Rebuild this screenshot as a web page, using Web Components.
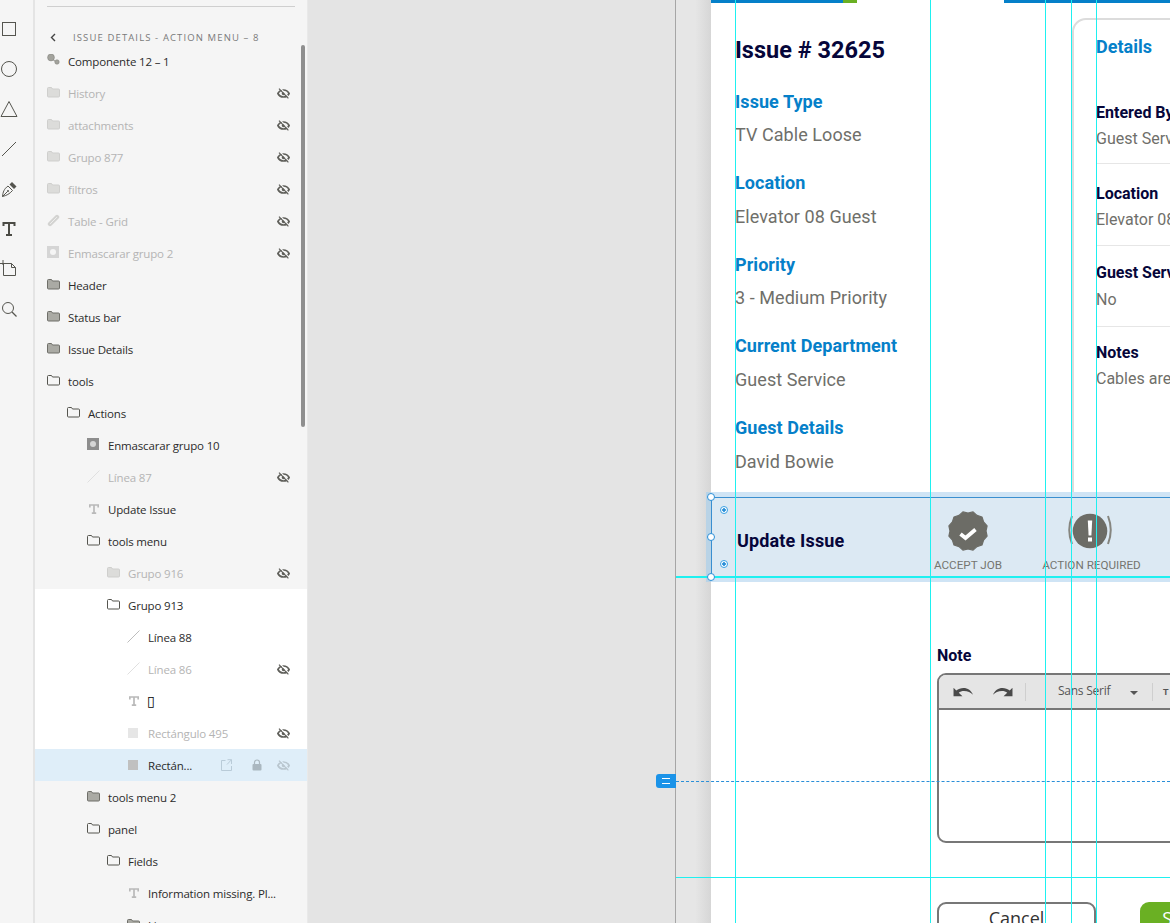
<!DOCTYPE html>
<html>
<head>
<meta charset="utf-8">
<title>Issue details</title>
<style>
  html, body { margin: 0; height: 100%; overflow: hidden; background: #e4e4e4; }
</style>
</head>
<body>
<app-shell></app-shell>

<script>
const ICONS = {
  folder: (stroke, fill) => `<svg width="13" height="11" viewBox="0 0 13 11"><path d="M.5 1.5q0-1 1-1h3l1 1.500h6q1 0 1 1v6q0 1-1 1h-10q-1 0-1-1z" fill="${fill}" stroke="${stroke}"/></svg>`,
  link: c => `<svg width="13" height="13" viewBox="0 0 13 13"><path d="M3 10 10 3" stroke="${c}" stroke-width="4.400" stroke-linecap="round"/><path d="M3.400 9.600 9.600 3.400" stroke="#f5f5f5" stroke-width=".8" stroke-linecap="round"/></svg>`,
  mask: (c, hole) => `<svg width="12" height="12" viewBox="0 0 12 12"><rect width="12" height="12" fill="${c}"/><circle cx="6" cy="6" r="3" fill="${hole}"/></svg>`,
  line: c => `<svg width="13" height="13" viewBox="0 0 13 13"><path d="M.5 12.500 12.500 .5" stroke="${c}"/></svg>`,
  text: () => `<svg style="margin:2px 0 0 2px" width="10" height="10" viewBox="0 0 10 10"><path d="M.8 3.400V1h8.400v2.400M5 1v8M2.800 9.200h4.400" fill="none" stroke="#b9b9b9" stroke-width="1.700"/></svg>`,
  rect: c => `<svg style="margin:2px 0 0 1px" width="10" height="10" viewBox="0 0 10 10"><rect width="10" height="10" fill="${c}"/></svg>`,
  comp: () => `<svg width="13" height="12" viewBox="0 0 13 12"><path d="M4 4 9 8" stroke="#8b8b85"/><circle cx="4" cy="3.500" r="3.400" fill="#a3a39d" stroke="#85857f" stroke-width=".6"/><circle cx="10" cy="8" r="2.200" fill="#a3a39d" stroke="#85857f" stroke-width=".6"/></svg>`
};

// eye with a slash; the light line beside the slash is the row background showing through
const EYE_OFF = (c, bg) => `<svg width="13" height="11" viewBox="0 0 13 11"><path d="M.9 5.500C2.200 3 4.200 2 6.500 2S10.800 3 12.100 5.500C10.800 8 8.800 9 6.500 9S2.200 8 .9 5.500z" fill="none" stroke="${c}" stroke-width="1.700"/><circle cx="6.500" cy="5.500" r="1.700" fill="${c}"/><path d="M3.100 0 12.500 9.800" stroke="${bg}" stroke-width="1.200"/><path d="M2 .6 11.400 10.400" stroke="${c}" stroke-width="1.200"/></svg>`;

class LayerRow extends HTMLElement {
  connectedCallback() {
    const level = parseInt(this.getAttribute('level')) || 0;
    const icon = this.getAttribute('icon') || 'folder';
    const dim = this.hasAttribute('dim');
    const open = this.hasAttribute('open');
    const hidden = this.hasAttribute('hidden-eye');
    const active = this.hasAttribute('active');
    const white = this.hasAttribute('white');
    const soft = this.hasAttribute('soft-icon');

    const c = dim ? '#d3d3d1' : '#a8a8a2';
    const hole = white ? '#fff' : '#f5f5f5';
    const rowBg = active ? '#dfeef9' : white ? '#fff' : '#f5f5f5';
    let glyph;
    if (icon === 'folder') {
      if (open) glyph = ICONS.folder('#55554f', 'none');
      else glyph = dim ? ICONS.folder('#cfcfcd', '#dcdcda') : ICONS.folder('#6f6f69', '#aaaaa4');
    }
    else if (icon === 'mask') glyph = dim ? ICONS.mask('#d5d5d5', hole) : ICONS.mask('#8d8d8d', '#d5d5d5');
    else if (icon === 'line') glyph = ICONS.line(soft ? '#bdbdbd' : '#e0e0e0');
    else if (icon === 'rect') glyph = ICONS.rect(dim ? '#e6e6e6' : '#c0c0c0');
    else glyph = ICONS[icon](c);

    this.attachShadow({ mode: 'open' });
    this.shadowRoot.innerHTML = `
      <style>
        :host {
          display: flex;
          align-items: center;
          height: 32px;
          padding-left: ${12 + level * 20}px;
          padding-right: 17px;
          color: ${dim ? '#b4b4b4' : '#2b2b2b'};
          background: ${active ? '#dfeef9' : white ? '#fff' : 'transparent'};
        }
        .ico { width: 21px; display: flex; align-items: center; flex: none; margin-top: -2px; }
        .lbl { flex: 1; white-space: nowrap; }
        .tools { display: flex; align-items: center; }
        .ext { margin-right: 20px; }
        .lock { margin-right: 15px; }
      </style>
      <span class="ico">${glyph}</span>
      <span class="lbl"><slot></slot></span>
      <span class="tools">
        ${active ? `<svg class="ext" width="11" height="12" viewBox="0 0 11 12"><path d="M4.500 1.500H.5v10h10V7M6.500 .7h4V5M10.500 .7 6 5.500" fill="none" stroke="#b9cbd8"/></svg>
          <svg class="lock" width="10" height="12" viewBox="0 0 10 12"><rect x=".5" y="5" width="9" height="6.500" rx="1" fill="#aab7c0"/><path d="M2.500 5V3.500a2.500 2.500 0 0 1 5 0V5" fill="none" stroke="#aab7c0" stroke-width="1.200"/></svg>` : ''}
        ${hidden ? EYE_OFF(active ? '#b9c6cf' : '#5f5f5a', rowBg) : ''}
      </span>`;
  }
}
customElements.define('layer-row', LayerRow);

class LayerPanel extends HTMLElement {
  constructor() {
    super();
    this.attachShadow({ mode: 'open' });
    this.shadowRoot.innerHTML = `
      <style>
        :host {
          display: block;
          position: relative;
          width: 272px;
          flex: none;
          height: 923px;
          overflow: hidden;
          background: #f5f5f5;
          font: 11.500px "Open Sans", "Noto Sans", sans-serif;
          letter-spacing: -.17px;
          box-sizing: border-box;
        }
        .rule { height: 1px; background: #cfcfcf; margin: 6px 12px 0; }
        .crumb {
          box-sizing: border-box;
          display: flex;
          align-items: center;
          height: 38px;
          padding: 22px 0 0 12px;
          font-size: 9.500px;
          letter-spacing: 1.120px;
          color: #7a7a7a;
        }
        .crumb svg { margin: 0 17px 0 3px; }
        .sel { background: #fff; }
        .bar {
          position: absolute;
          left: 266px;
          top: 45px;
          width: 4px;
          height: 382px;
          border-radius: 2px;
          background: #8f8f8f;
        }
      </style>
      <div class="rule"></div>
      <div class="crumb">
        <svg width="6" height="9" viewBox="0 0 6 9"><path d="M5 1 1.500 4.500 5 8" fill="none" stroke="#444" stroke-width="1.400"/></svg>
        ISSUE DETAILS - ACTION MENU – 8
      </div>
      <layer-row icon="comp">Componente 12 – 1</layer-row>
      <layer-row dim hidden-eye>History</layer-row>
      <layer-row dim hidden-eye>attachments</layer-row>
      <layer-row dim hidden-eye>Grupo 877</layer-row>
      <layer-row dim hidden-eye>filtros</layer-row>
      <layer-row dim hidden-eye icon="link">Table - Grid</layer-row>
      <layer-row dim hidden-eye icon="mask">Enmascarar grupo 2</layer-row>
      <layer-row>Header</layer-row>
      <layer-row>Status bar</layer-row>
      <layer-row>Issue Details</layer-row>
      <layer-row open>tools</layer-row>
      <layer-row open level="1">Actions</layer-row>
      <layer-row level="2" icon="mask">Enmascarar grupo 10</layer-row>
      <layer-row level="2" icon="line" dim hidden-eye>Línea 87</layer-row>
      <layer-row level="2" icon="text">Update Issue</layer-row>
      <layer-row level="2" open>tools menu</layer-row>
      <layer-row level="3" dim hidden-eye>Grupo 916</layer-row>
      <div class="sel">
        <layer-row level="3" open white>Grupo 913</layer-row>
        <layer-row level="4" icon="line" soft-icon white>Línea 88</layer-row>
        <layer-row level="4" icon="line" dim hidden-eye white>Línea 86</layer-row>
        <layer-row level="4" icon="text" white><span style="font:700 14px 'DejaVu Sans',sans-serif;color:#000;margin-left:-1px">▯</span></layer-row>
        <layer-row level="4" icon="rect" dim hidden-eye white>Rectángulo 495</layer-row>
      </div>
      <layer-row level="4" icon="rect" active hidden-eye>Rectán...</layer-row>
      <layer-row level="2">tools menu 2</layer-row>
      <layer-row level="2" open>panel</layer-row>
      <layer-row level="3" open>Fields</layer-row>
      <layer-row level="4" icon="text">Information missing. Pl...</layer-row>
      <layer-row level="4">Line</layer-row>
      <div class="bar"></div>`;
  }
}
customElements.define('layer-panel', LayerPanel);

class ToolRail extends HTMLElement {
  constructor() {
    super();
    this.attachShadow({ mode: 'open' });
    const c = '#55554f';
    const tools = [
      `<rect x="2.500" y="2.500" width="13" height="13" fill="none" stroke="${c}"/>`,
      `<circle cx="9" cy="9" r="7.500" fill="none" stroke="${c}"/>`,
      `<path d="M9 1.500 17 16.500H1z" fill="none" stroke="${c}"/>`,
      `<path d="M2 16 16 2" fill="none" stroke="${c}"/>`,
      `<path d="M2.500 16.500C3 12 4 9 8 6l4.500 4.500C9.500 14 6.500 15.500 2.500 16.500zM2.500 16.500l5-5" fill="none" stroke="${c}"/><path d="M9.500 4.500 12 2 16.500 6.500 14 9z" fill="${c}"/><circle cx="8" cy="11" r="1" fill="${c}"/>`,
      `<path d="M3.500 6V3h11v3M9 3v12M6 15h6" fill="none" stroke="#4b4b45" stroke-width="2"/>`,
      `<path d="M3.500 3.500h8l4 4v8h-12zM11.500 3.500v4h4M0 3.500h5M3 0v5" fill="none" stroke="${c}"/>`,
      `<circle cx="8" cy="8" r="5.500" fill="none" stroke="${c}"/><path d="M12 12l4.500 4.500" stroke="${c}" stroke-width="1.300"/>`
    ];
    this.shadowRoot.innerHTML = `
      <style>
        :host {
          display: flex;
          flex-direction: column;
          width: 33px;
          height: 923px;
          flex: none;
          padding-top: 20px;
          background: #f5f5f5;
          border-right: 2px solid #e4e4e4;
          box-sizing: content-box;
        }
        svg { display: block; height: 18px; width: 18px; margin-bottom: 22px; }
      </style>
      ${tools.map(t => `<svg viewBox="0 0 18 18">${t}</svg>`).join('')}`;
  }
}
customElements.define('tool-rail', ToolRail);

class IssueField extends HTMLElement {
  constructor() {
    super();
    this.attachShadow({ mode: 'open' });
    this.shadowRoot.innerHTML = `
      <style>
        :host { display: block; height: 81.600px; letter-spacing: .06px; }
        .k { font-weight: 700; font-size: 18px; line-height: 24px; color: #0580c9; padding-top: .5px; }
        .v { font-size: 18px; line-height: 24px; color: #6f6f6a; margin-top: 9.800px; white-space: nowrap; }
      </style>
      <div class="k"></div>
      <div class="v"><slot></slot></div>`;
  }
  connectedCallback() {
    this.shadowRoot.querySelector('.k').textContent = this.getAttribute('label');
  }
}
customElements.define('issue-field', IssueField);

class DetailRow extends HTMLElement {
  constructor() {
    super();
    this.attachShadow({ mode: 'open' });
    this.shadowRoot.innerHTML = `
      <style>
        :host { display: block; box-sizing: border-box; height: 82px; border-bottom: 1px solid #e6e6e6; white-space: nowrap; }
        :host([last]) { border-bottom: 0; }
        .k { font-weight: 700; font-size: 16px; line-height: 22px; color: #06063a; padding-top: var(--pad, 20px); }
        .v { font-size: 16px; line-height: 22px; color: #6f6f6a; margin-top: var(--gap, 4px); }
      </style>
      <div class="k"></div>
      <div class="v"><slot></slot></div>`;
  }
  connectedCallback() {
    this.shadowRoot.querySelector('.k').textContent = this.getAttribute('label');
  }
}
customElements.define('detail-row', DetailRow);

class ActionIcon extends HTMLElement {
  connectedCallback() {
    this.attachShadow({ mode: 'open' });
    const kind = this.getAttribute('kind');
    const c = '#6c6c66';
    let pts = [];
    for (let i = 0; i < 24; i++) {
      const r = i % 2 ? 19.800 : 18;
      const a = i * Math.PI / 12;
      pts.push((21 + r * Math.sin(a)).toFixed(1) + ',' + (21 - r * Math.cos(a)).toFixed(1));
    }
    const art = kind === 'accept'
      ? `<polygon points="${pts.join(' ')}" fill="${c}" stroke="${c}" stroke-width="1.200" stroke-linejoin="round"/>
         <path d="M13.500 24 18.500 28 28.500 19.500" fill="none" stroke="#fff" stroke-width="3.800"/>`
      : `<circle cx="21" cy="21" r="17.300" fill="${c}"/>
         <path d="M18.800 10.500h4.400L22.400 25.500h-2.800z" fill="#fff"/><rect x="19" y="27.500" width="4" height="4" fill="#fff"/>
         <path d="M3 6Q-2.500 20 3 34M39 6Q44.500 20 39 34" fill="none" stroke="#85857f" stroke-width="2"/>`;
    this.shadowRoot.innerHTML = `
      <style>
        :host {
          display: flex;
          flex-direction: column;
          align-items: center;
          width: 120px;
          margin-top: -2px;
        }
        svg { display: block; overflow: visible; }
        :host([kind="action"]) svg { margin-right: 3px; }
        span { font-size: 11.700px; line-height: 16px; color: #757570; margin-top: 4.500px; white-space: nowrap; }
      </style>
      <svg width="42" height="42" viewBox="0 0 42 42">${art}</svg>
      <span><slot></slot></span>`;
  }
}
customElements.define('action-icon', ActionIcon);

class UpdateBand extends HTMLElement {
  constructor() {
    super();
    this.attachShadow({ mode: 'open' });
    this.shadowRoot.innerHTML = `
      <style>
        :host {
          position: absolute;
          left: 30px;
          top: 492px;
          width: 600px;
          height: 90px;
          background: #cfe4f5;
        }
        .strip { position: absolute; left: 0; top: 0; width: 5px; height: 100%; background: #b9d3e6; }
        .inner {
          position: absolute;
          left: 5px;
          right: 0;
          top: 5px;
          height: 80px;
          box-sizing: border-box;
          background: #dce9f3;
          border-top: 1px solid #3a8fd0;
          border-left: 1px solid #3a8fd0;
          display: flex;
          align-items: center;
          padding-left: 25px;
        }
        .title { width: 171px; font-size: 18px; font-weight: 700; color: #06063a; margin-top: 5px; white-space: nowrap; letter-spacing: .15px; }
        .acts { display: flex; gap: 3.500px; padding-top: 10px; }
      </style>
      <div class="strip"></div>
      <div class="inner">
        <div class="title">Update Issue</div>
        <div class="acts">
          <action-icon kind="accept">ACCEPT JOB</action-icon>
          <action-icon kind="action">ACTION REQUIRED</action-icon>
        </div>
      </div>`;
  }
}
customElements.define('update-band', UpdateBand);

class NoteEditor extends HTMLElement {
  constructor() {
    super();
    this.attachShadow({ mode: 'open' });
    const arrow = 'M.5 9.500V1.500l2.600 2.600C5 2.500 7.500 1.700 10 1.700c4 0 7.500 2.500 9 6.500-2-2.500-5-3.700-8.500-3.700-2 0-3.800.6-5 1.600L9 9.500z';
    this.shadowRoot.innerHTML = `
      <style>
        :host {
          position: absolute;
          left: 226px;
          top: 645px;
          width: 500px;
          display: block;
        }
        label { display: block; font-size: 16px; font-weight: 700; line-height: 22px; color: #06063a; margin-bottom: 6px; }
        .box { box-sizing: border-box; height: 170px; border: 2px solid #777; border-radius: 9px; overflow: hidden; background: #fff; }
        .bar {
          box-sizing: border-box;
          display: flex;
          align-items: center;
          height: 35px;
          background: #e5e5e5;
          border-bottom: 2px solid #777;
          color: #555;
          font: 12px "Open Sans", "Noto Sans", sans-serif;
        }
        .bar svg { flex: none; }
        .sep { width: 1px; height: 18px; background: #cfcfcf; flex: none; }
        .font { width: 72px; margin-left: 32px; white-space: nowrap; letter-spacing: -.25px; margin-top: -3px; }
        .caret { width: 0; height: 0; border: 4px solid transparent; border-top-color: #555; border-bottom: 0; margin-top: 2px; }
        .t { font: 700 9px "Liberation Sans", sans-serif; margin-left: 10px; }
      </style>
      <label>Note</label>
      <div class="box">
        <div class="bar">
          <svg style="margin-left:14px" width="21" height="11" viewBox="0 0 20 10"><path d="${arrow}" fill="#4a4a4a"/></svg>
          <svg style="margin-left:18px;transform:scaleX(-1)" width="21" height="11" viewBox="0 0 20 10"><path d="${arrow}" fill="#4a4a4a"/></svg>
          <span class="sep" style="margin-left:12px"></span>
          <span class="font">Sans Serif</span>
          <span class="caret"></span>
          <span class="sep" style="margin-left:14px"></span>
          <span class="t">T</span>
        </div>
      </div>`;
  }
}
customElements.define('note-editor', NoteEditor);

class FormButtons extends HTMLElement {
  constructor() {
    super();
    this.attachShadow({ mode: 'open' });
    this.shadowRoot.innerHTML = `
      <style>
        :host {
          position: absolute;
          left: 226px;
          top: 902px;
          display: flex;
          gap: 44px;
          font: 18px "Open Sans", "Noto Sans", sans-serif;
        }
        button {
          font: inherit;
          width: 159px;
          height: 48px;
          padding: 0 0 16px;
          border-radius: 9px;
          box-sizing: border-box;
          white-space: nowrap;
        }
        .cancel { background: #fff; border: 2px solid #777; color: #333; }
        .save { width: 160px; background: #6ab023; border: 0; color: #fff; }
      </style>
      <button class="cancel">Cancel</button>
      <button class="save">Save Changes</button>`;
  }
}
customElements.define('form-buttons', FormButtons);

class CanvasBoard extends HTMLElement {
  constructor() {
    super();
    this.attachShadow({ mode: 'open' });
    const vGuides = [735, 930, 1045, 1071, 1096];
    const handles = [497, 537, 577];
    const radios = [510, 564];
    // canvas starts at x=307, so everything over it is shifted by that
    this.shadowRoot.innerHTML = `
      <style>
        :host {
          display: block;
          position: relative;
          flex: 1;
          height: 923px;
          overflow: hidden;
          background: #e4e4e4;
          box-shadow: inset 1px 0 0 #e9e9e9;
          font-family: Roboto, "Liberation Sans", sans-serif;
        }
        .edge { position: absolute; left: 368px; top: 0; bottom: 0; width: 1px; background: #a6a6a6; }
        .gutter { position: absolute; left: 369px; width: 35px; top: 0; bottom: 0; background: linear-gradient(90deg, #e6e6e6 55%, #d6d6d6); }
        .board { position: absolute; left: 404px; top: 0; width: 760px; height: 923px; background: #fff; overflow: hidden; }
        .bars { display: flex; height: 3px; }
        .b1 { width: 132px; background: #0580c9; }
        .b2 { width: 14px; background: #6ab023; }
        .b3 { width: 147px; }
        .b4 { flex: 1; background: #0580c9; }
        .main { position: absolute; left: 24px; top: 33px; width: 300px; }
        h1 { margin: 0 0 22px; font-size: 23.500px; line-height: 34px; font-weight: 700; color: #06063a; }
        .card {
          position: absolute;
          left: 361px;
          top: 18px;
          width: 400px;
          height: 495px;
          box-sizing: border-box;
          border: 2px solid #dcdcdc;
          border-radius: 14px;
          padding: 15px 0 0 22px;
        }
        .card h2 { margin: 0 0 23px; font-size: 18px; font-weight: 700; line-height: 24px; color: #0580c9; }
        .v { position: absolute; top: 0; bottom: 0; width: 1px; background: #1ef0f0; }
        .h { position: absolute; left: 369px; right: 0; height: 1px; background: #1ef0f0; }
        .dash { position: absolute; left: 369px; right: 0; top: 781px; border-top: 1px dashed #2a8fd8; }
        .tag {
          position: absolute;
          left: 349px;
          top: 774px;
          width: 20px;
          height: 14px;
          background: #1b93e8;
          border-radius: 3px 0 0 3px;
          display: flex;
          align-items: center;
          justify-content: center;
        }
        .tag i { display: block; width: 8px; height: 4px; border-top: 1px solid #fff; border-bottom: 1px solid #fff; }
        .handle { position: absolute; left: 399.500px; width: 6px; height: 6px; border: 1.500px solid #2a8fd8; border-radius: 50%; background: #fff; }
        .radio { position: absolute; left: 413px; width: 6px; height: 6px; border: 1.500px solid #3aa2e6; border-radius: 50%; background: radial-gradient(circle, #2a8fd8 0 1.500px, #fff 2px); }
      </style>
      <div class="edge"></div>
      <div class="gutter"></div>
      <div class="board">
        <div class="bars"><span class="b1"></span><span class="b2"></span><span class="b3"></span><span class="b4"></span></div>
        <div class="main">
          <h1>Issue # 32625</h1>
          <issue-field label="Issue Type">TV Cable Loose</issue-field>
          <issue-field label="Location">Elevator 08 Guest</issue-field>
          <issue-field label="Priority">3 - Medium Priority</issue-field>
          <issue-field label="Current Department">Guest Service</issue-field>
          <issue-field label="Guest Details">David Bowie</issue-field>
        </div>
        <div class="card">
          <h2>Details</h2>
          <detail-row label="Entered By">Guest Service</detail-row>
          <detail-row label="Location" style="--pad:19px">Elevator 08</detail-row>
          <detail-row label="Guest Service" style="--pad:16px;--gap:5px;height:81px">No</detail-row>
          <detail-row label="Notes" style="--pad:15px" last>Cables are loose</detail-row>
        </div>
      </div>
      <update-band style="left:399px"></update-band>
      <note-editor style="left:630px"></note-editor>
      <form-buttons style="left:630px"></form-buttons>
      ${vGuides.map(x => `<div class="v" style="left:${x - 307}px"></div>`).join('')}
      <div class="h" style="top:576px;height:2px"></div>
      <div class="h" style="top:877px"></div>
      <div class="dash"></div>
      <div class="tag"><i></i></div>
      ${handles.map(y => `<div class="handle" style="top:${y - 4.500}px"></div>`).join('')}
      ${radios.map(y => `<div class="radio" style="top:${y - 4}px"></div>`).join('')}`;
  }
}
customElements.define('canvas-board', CanvasBoard);

class AppShell extends HTMLElement {
  constructor() {
    super();
    this.attachShadow({ mode: 'open' });
    this.shadowRoot.innerHTML = `
      <style>
        :host { display: flex; width: 1170px; height: 923px; overflow: hidden; }
      </style>
      <tool-rail></tool-rail>
      <layer-panel></layer-panel>
      <canvas-board></canvas-board>`;
  }
}
customElements.define('app-shell', AppShell);
</script>
</body>
</html>
